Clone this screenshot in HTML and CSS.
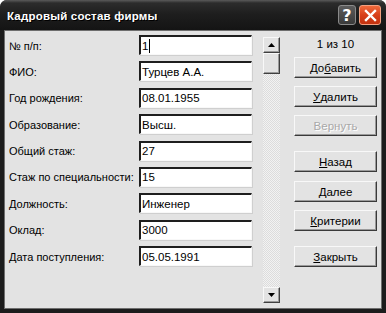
FILE: index.html
```html
<!DOCTYPE html>
<html lang="ru">
<head>
<meta charset="utf-8">
<title>Кадровый состав фирмы</title>
<link rel="stylesheet" href="styles.css">
</head>
<body>
<div class="window">
  <div class="titlebar">
    <span class="title">Кадровый состав фирмы</span>
    <div class="tb-buttons">
      <span class="tb-btn help">?</span>
      <span class="tb-btn close">
        <svg width="13" height="13" viewBox="0 0 13 13"><path d="M2 2 L11 11 M11 2 L2 11" stroke="#fff" stroke-width="2.4" stroke-linecap="square"/></svg>
      </span>
    </div>
  </div>
  <div class="client">
    <div class="form">
      <label class="lbl">№ п/п:</label><div class="field">1<span class="caret"></span></div>
      <label class="lbl">ФИО:</label><div class="field">Турцев А.А.</div>
      <label class="lbl">Год рождения:</label><div class="field">08.01.1955</div>
      <label class="lbl">Образование:</label><div class="field">Высш.</div>
      <label class="lbl">Общий стаж:</label><div class="field">27</div>
      <label class="lbl">Стаж по специальности:</label><div class="field">15</div>
      <label class="lbl">Должность:</label><div class="field">Инженер</div>
      <label class="lbl">Оклад:</label><div class="field">3000</div>
      <label class="lbl">Дата поступления:</label><div class="field">05.05.1991</div>
    </div>
    <div class="scrollbar">
      <div class="sb-btn"><svg width="7" height="4" viewBox="0 0 7 4"><path d="M3.5 0 L7 4 L0 4 Z" fill="#000"/></svg></div>
      <div class="sb-btn thumb"></div>
      <div class="sb-track"></div>
      <div class="sb-btn"><svg width="7" height="4" viewBox="0 0 7 4"><path d="M0 0 L7 0 L3.5 4 Z" fill="#000"/></svg></div>
    </div>
    <div class="actions">
      <div class="counter">1 из 10</div>
      <button class="btn b-add">До<u>б</u>авить</button>
      <button class="btn b-del"><u>У</u>далить</button>
      <button class="btn b-undo" disabled>Вернуть</button>
      <button class="btn b-prev"><u>Н</u>азад</button>
      <button class="btn b-next"><u>Д</u>алее</button>
      <button class="btn b-crit"><u>К</u>ритерии</button>
      <button class="btn b-close"><u>З</u>акрыть</button>
    </div>
  </div>
</div>
</body>
</html>
```
FILE: styles.css
```css
* { box-sizing: border-box; }
html, body { margin: 0; padding: 0; background: #fff; }
body { font-family: "Liberation Sans", Arial, sans-serif; font-size: 11px; color: #000; }

.window {
  width: 386px;
  height: 313px;
  background: #1c1c1c;
  border-radius: 7px 7px 0 0;
  display: flex;
  flex-direction: column;
  overflow: hidden;
}

.titlebar {
  height: 30px;
  flex: none;
  display: flex;
  align-items: center;
  padding-left: 7px;
  background: linear-gradient(#5a5a5a 0px, #2c2c2c 3px, #1e1e1e 14px, #141414 30px);
}
.title {
  color: #fff;
  font-weight: bold;
  font-size: 11.5px;
  letter-spacing: 0.2px;
  margin-top: 2px;
  flex: 1;
  text-shadow: 1px 1px 0 #000;
}
.tb-buttons {
  display: flex;
  gap: 3px;
  margin-right: 5px;
}
.tb-btn {
  height: 20px;
  border-radius: 3px;
  display: flex;
  align-items: center;
  justify-content: center;
}
.help {
  width: 18px;
  background: linear-gradient(#5c5c5c, #3a3a3a);
  border: 1px solid #8a8a8a;
  color: #fff;
  font-weight: bold;
  font-size: 16px;
  font-family: "DejaVu Sans", sans-serif;
}
.close {
  width: 22px;
  background: linear-gradient(#f06a3c, #d8401a 50%, #c23210);
  border: 1px solid #f4a080;
}

.client {
  flex: 1;
  margin: 0 4px 4px 4px;
  background: #e3e3e3;
  border: 1px solid #6e6e6e;
  display: flex;
  padding: 4px 0 0 4px;
}

.form {
  display: grid;
  grid-template-columns: 130px 113px;
  grid-auto-rows: 20px;
  row-gap: 6.4px;
  align-content: start;
  margin-right: 11px;
}
.lbl {
  display: flex;
  align-items: center;
  padding-top: 1px;
  white-space: nowrap;
}
.field {
  background: #fff;
  border-style: solid;
  border-width: 2px 1px 1px 2px;
  border-color: #1e1e1e #f8f8f8 #f8f8f8 #1e1e1e;
  box-shadow: 1px 1px 0 #cfcfcf;
  padding: 0 2px 0 1px;
  display: flex;
  align-items: center;
  white-space: nowrap;
  line-height: 14px;
  font-size: 11.5px;
}
.caret {
  display: inline-block;
  width: 1px;
  height: 14px;
  background: #000;
  margin-left: 1px;
}

.scrollbar {
  width: 17px;
  height: 266px;
  margin-top: 2px;
  display: flex;
  flex-direction: column;
  margin-right: 14px;
}
.sb-btn {
  height: 16px;
  flex: none;
  background: #e3e3e3;
  border-style: solid;
  border-width: 1px;
  border-color: #f8f8f8 #404040 #404040 #f8f8f8;
  box-shadow: inset -1px -1px 0 #9a9a9a;
  display: flex;
  align-items: center;
  justify-content: center;
}
.sb-btn.thumb { height: 21px; }
.sb-track {
  flex: 1;
  background-color: #f2f2f2;
  background-image:
    linear-gradient(45deg, #dcdcdc 25%, transparent 25%, transparent 75%, #dcdcdc 75%),
    linear-gradient(45deg, #dcdcdc 25%, transparent 25%, transparent 75%, #dcdcdc 75%);
  background-size: 2px 2px;
  background-position: 0 0, 1px 1px;
}

.actions {
  width: 83px;
  display: flex;
  flex-direction: column;
  padding-top: 2px;
}
.counter {
  text-align: center;
  height: 14px;
  line-height: 14px;
  font-size: 11.5px;
}
.btn {
  font-family: inherit;
  font-size: 11.5px;
  color: #000;
  height: 21px;
  width: 83px;
  padding: 0;
  background: #e3e3e3;
  border-style: solid;
  border-width: 1px;
  border-color: #f8f8f8 #3a3a3a #3a3a3a #f8f8f8;
  box-shadow: inset -1px -1px 0 #9a9a9a;
  display: flex;
  align-items: center;
  justify-content: center;
}
.btn u { text-underline-offset: 1px; }
.b-add { margin-top: 6px; }
.b-del { margin-top: 8px; }
.b-undo { margin-top: 8px; color: #a8a8a8; text-shadow: 1px 1px 0 #fff; }
.b-prev { margin-top: 15px; }
.b-next { margin-top: 9px; }
.b-crit { margin-top: 8px; }
.b-close { margin-top: 15px; }
```
